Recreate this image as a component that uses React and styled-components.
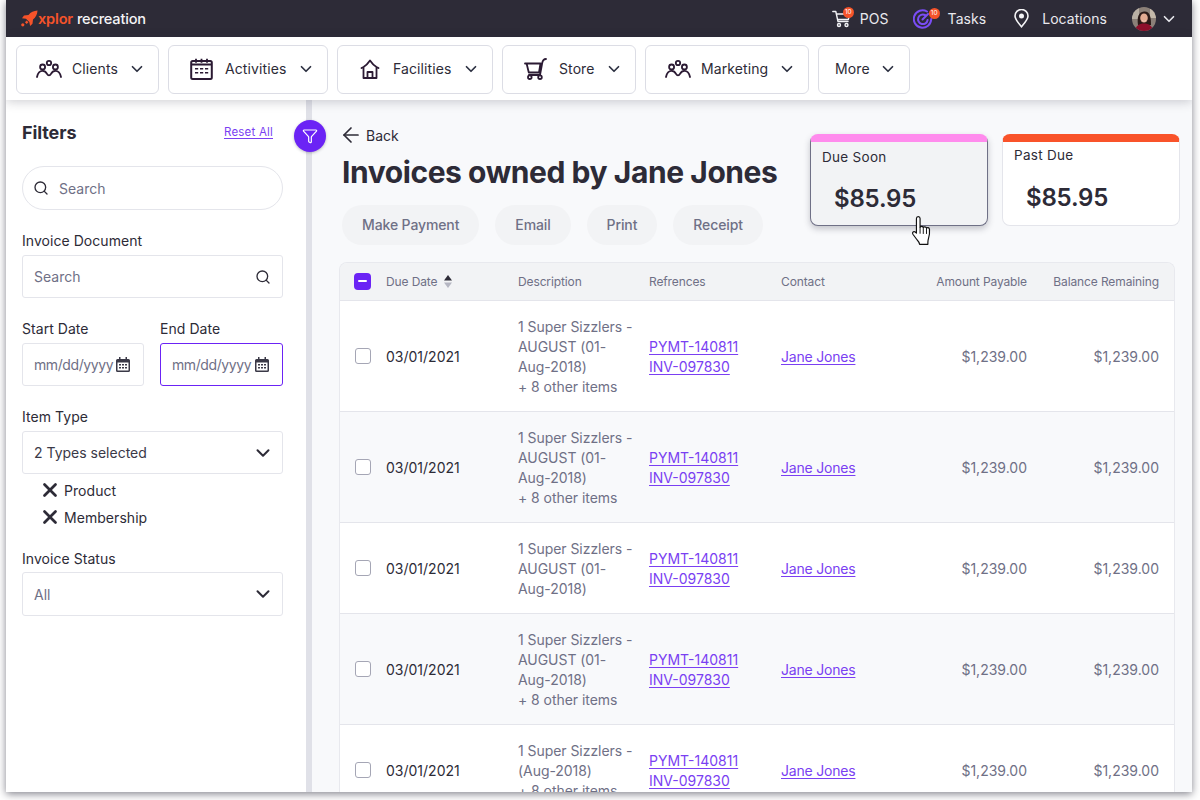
import React from "react";
import styled, { createGlobalStyle } from "styled-components";
import { ArrowLeft, ChevronDown, Funnel, Search, X } from "lucide-react";

const Global = createGlobalStyle`
  html, body { margin: 0; padding: 0; background: #fff; height: 800px; overflow: hidden; }
  body { font-family: Inter, "Liberation Sans", sans-serif; color: #2d2b37; }
  * { box-sizing: border-box; }
`;

const Frame = styled.div`
  width: 1200px;
  height: 800px;
  overflow: hidden;
`;
const Screen = styled.div`
  position: relative;
  width: 1186px;
  height: 792px;
  margin: 0 8px 8px 6px;
  display: flex;
  flex-direction: column;
  overflow: hidden;
  background: #fff;
  box-shadow: 0 2px 8px rgba(30, 30, 45, .55);
`;
const TopBar = styled.header`
  height: 37px;
  flex: none;
  background: #2d2b37;
  display: flex;
  align-items: center;
  justify-content: space-between;
  padding: 0 14px 0 15px;
`;
const Logo = styled.div`
  display: flex;
  align-items: center;
  font-size: 14.6px;
  letter-spacing: -.2px;
`;
const LogoMark = styled.span`
  color: #f5532a;
  font-weight: 600;
  margin-right: 4px;
`;
const LogoWord = styled.span`
  color: #f4f4f6;
  font-weight: 500;
`;
const TopActions = styled.nav`
  display: flex;
  align-items: center;
`;
const TopAction = styled.div`
  position: relative;
  display: flex;
  align-items: center;
  gap: ${p => p.$gap}px;
  margin-left: ${p => p.$ml}px;
  color: #e9e9ee;
  font-size: 14px;
  letter-spacing: .05px;
`;
const CountBadge = styled.span`
  position: absolute;
  left: ${p => p.$left}px;
  top: ${p => p.$top}px;
  width: 11px;
  height: 11px;
  border-radius: 50%;
  background: #f5532a;
  color: #fff;
  font-size: 6.5px;
  line-height: 11px;
  text-align: center;
  letter-spacing: 0;
`;
const AvatarWrap = styled.div`
  display: flex;
  align-items: center;
  gap: 4px;
  margin-left: 25px;
  color: #e9e9ee;
`;
const NavBar = styled.nav`
  position: relative;
  z-index: 2;
  height: 63px;
  flex: none;
  background: #fff;
  display: flex;
  gap: 9px;
  padding: 8px 10px 0;
  box-shadow: 0 2px 10px rgba(40, 40, 60, .22);
`;
const NavButton = styled.button`
  width: ${p => p.$w}px;
  height: 49px;
  border: 1px solid #dcdde5;
  border-radius: 6px;
  background: #fff;
  display: flex;
  align-items: center;
  padding: 0 12px 2px ${p => p.$pl}px;
  font: 400 14px Inter, sans-serif;
  letter-spacing: .1px;
  color: #2d2b37;
`;
const NavIcon = styled.span`
  display: flex;
  margin-right: ${p => p.$mr}px;
`;
const NavChevron = styled(ChevronDown)`
  margin-left: auto;
  flex: none;
`;
const Body = styled.div`
  flex: 1;
  min-height: 0;
  display: flex;
  position: relative;
`;
const Sidebar = styled.aside`
  width: 306px;
  flex: none;
  background: #fff;
  border-right: 6px solid #e0e1e8;
  padding: 20px 23px 0 16px;
`;
const SidebarHead = styled.div`
  display: flex;
  align-items: center;
  justify-content: space-between;
  height: 24px;
  margin-right: 10px;
  margin-bottom: 22px;
`;
const SidebarTitle = styled.h2`
  margin: 0;
  font-size: 18px;
  font-weight: 700;
  color: #2d2b37;
  letter-spacing: -.1px;
`;
const ResetLink = styled.a`
  color: #7a3ff2;
  font-size: 11.5px;
  text-decoration: underline;
  text-underline-offset: 2px;
  letter-spacing: .2px;
`;
const Control = styled.div`
  display: flex;
  align-items: center;
  height: ${p => p.$h || 43}px;
  border: 1px solid ${p => p.$focus ? "#6b23f5" : "#e4e5eb"};
  border-radius: ${p => p.$pill ? "22px" : "3px"};
  padding: 0 ${p => p.$pr ?? 11}px 0 ${p => p.$pl ?? 11}px;
  gap: ${p => p.$gap || 0}px;
  font-size: 14px;
  letter-spacing: ${p => p.$ls ?? 0}px;
  color: ${p => p.$dark ? "#3a3947" : "#6f7086"};
  background: #fff;
`;
const Grow = styled.span`
  flex: 1;
  white-space: nowrap;
`;
const FieldLabel = styled.label`
  display: block;
  font-size: 14px;
  line-height: 20px;
  letter-spacing: .05px;
  color: #2d2b37;
  margin-bottom: ${p => p.$mb ?? 4}px;
`;
const Field = styled.div`
  margin-top: ${p => p.$mt}px;
`;
const DateRow = styled.div`
  display: grid;
  grid-template-columns: 122px 123px;
  gap: 16px;
  margin-top: 21px;
`;
const Chips = styled.div`
  display: flex;
  flex-direction: column;
  gap: 7px;
  padding: 6px 0 0 17px;
`;
const Chip = styled.div`
  display: flex;
  align-items: center;
  gap: 3px;
  height: 20px;
  font-size: 14px;
  letter-spacing: .05px;
  color: #2d2b37;
`;
const FilterFab = styled.button`
  position: absolute;
  left: 288px;
  top: 20px;
  width: 32px;
  height: 32px;
  z-index: 3;
  padding: 0;
  border: none;
  border-radius: 50%;
  background: #6b23f5;
  color: #fff;
  display: flex;
  align-items: center;
  justify-content: center;
  box-shadow: 0 1px 3px rgba(40, 40, 60, .3);
`;
const Main = styled.main`
  flex: 1;
  min-width: 0;
  background: #f8f9fb;
  padding: 25px 17px 0 27px;
  overflow: hidden;
`;
const MainHead = styled.div`
  display: flex;
  justify-content: space-between;
  margin-bottom: 17px;
`;
const HeadLeft = styled.div`
  padding-left: 3px;
`;
const BackLink = styled.div`
  display: flex;
  align-items: center;
  gap: 3px;
  height: 20px;
  font-size: 14px;
  letter-spacing: 0;
`;
const BackArrow = styled(ArrowLeft)`
  margin-left: -3px;
`;
const Title = styled.h1`
  margin: 9px 0 15px;
  font-size: 30px;
  line-height: 36px;
  font-weight: 700;
  letter-spacing: -.43px;
  color: #2d2b37;
  white-space: nowrap;
`;
const Actions = styled.div`
  display: flex;
  gap: 16px;
`;
const PillButton = styled.button`
  height: 40px;
  padding: 0 20px 1px;
  border: none;
  border-radius: 20px;
  background: #f2f3f5;
  color: #6f7086;
  font: 500 14px Inter, sans-serif;
  letter-spacing: -.12px;
`;
const Cards = styled.div`
  display: flex;
  gap: 14px;
  margin: 9px -5px 0 0;
`;
const DueCard = styled.div`
  position: relative;
  width: 178px;
  height: 92px;
  border-radius: 8px;
  background: ${p => p.$hover ? "#f2f3f5" : "#fff"};
  border: 1px solid ${p => p.$hover ? "#6f7086" : "#e4e5eb"};
  border-top: 8px solid ${p => p.$band};
  box-shadow: ${p => p.$hover ? "0 3px 6px rgba(40,40,60,.25)" : "none"};
  padding: ${p => p.$hover ? 7 : 5}px 11px 0;
`;
const CardLabel = styled.div`
  font-size: 13.5px;
  line-height: 16px;
  letter-spacing: .3px;
`;
const CardValue = styled.div`
  margin: ${p => p.$mt}px 0 0 12px;
  font-size: 24px;
  line-height: 30px;
  font-weight: 600;
  letter-spacing: -.2px;
`;
const Pointer = styled.svg`
  position: absolute;
  left: 100px;
  top: 73px;
`;
const Table = styled.section`
  border: 1px solid #e8e9ee;
  border-bottom: none;
  border-radius: 8px 8px 0 0;
  overflow: hidden;
`;
const Row = styled.div`
  display: grid;
  grid-template-columns: 32px 132px 131px 132px 132px 114px 132px;
  align-items: center;
  padding: 0 15px 0 14px;
`;
const HeadRow = styled(Row)`
  height: 38px;
  padding-bottom: 1px;
  background: #f2f3f5;
  border-bottom: 1px solid #e4e5eb;
  font-size: 12px;
  letter-spacing: -.12px;
  color: #6f7086;
`;
const BodyRow = styled(Row)`
  padding-top: 16px;
  padding-bottom: 14px;
  background: ${p => p.$alt ? "#f8f9fb" : "#fff"};
  border-bottom: 1px solid #e4e5eb;
  font-size: 14px;
  line-height: 20px;
  letter-spacing: 0;
`;
const RightCell = styled.div`
  text-align: right;
  color: #6f7086;
`;
const SortCell = styled.div`
  display: flex;
  align-items: center;
  gap: 7px;
`;
const DateCell = styled.div`
  color: #2d2b37;
`;
const DescCell = styled.div`
  color: #6f7086;
  letter-spacing: -.05px;
  white-space: pre-line;
`;
const RefCell = styled.div`
  display: flex;
  flex-direction: column;
  align-items: flex-start;
`;
const TextLink = styled.a`
  color: #7a3ff2;
  text-decoration: underline;
  text-underline-offset: 2px;
  justify-self: start;
`;
const ContactLink = styled(TextLink)`
  letter-spacing: -.2px;
`;
const Check = styled.span`
  width: 16px;
  height: 16px;
  border: 1.5px solid #a5a6b5;
  border-radius: 3px;
  background: #fff;
  display: block;
  margin: -2px 0 0 1px;
`;
const CheckOn = styled.span`
  width: 17px;
  height: 17px;
  border-radius: 4px;
  background: #6b23f5;
  display: flex;
  align-items: center;
  justify-content: center;
  &::after { content: ""; width: 9px; height: 2px; background: #fff; border-radius: 1px; }
`;
const DateSvg = styled.svg`
  flex: none;
`;

const Ink = "#2b1a33";
const stroke = { fill: "none", stroke: Ink, strokeWidth: 1.8, strokeLinecap: "round", strokeLinejoin: "round" };

const PeopleIcon = () => (
  <svg width="26" height="20" viewBox="0 0 26 20" {...stroke}>
    <circle cx="13" cy="4" r="2.2" />
    <circle cx="6.6" cy="8" r="2.5" />
    <circle cx="19.4" cy="8" r="2.5" />
    <path d="M1 18c.8-4 2.8-6.2 5.6-6.2 2 0 3.4 1 4.4 3 .5 1 1.3 1.6 2 1.6s1.500-.6 2-1.600c1-2 2.400-3 4.400-3 2.800 0 4.800 2.200 5.600 6.200" />
  </svg>
);
const CalendarIcon = () => (
  <svg width="23" height="22" viewBox="0 0 23 22" fill="none">
    <rect x="1.200" y="3" width="20.600" height="18" rx="1.500" stroke={Ink} strokeWidth="2" />
    <path d="M1.500 6.500h20M6 .8v4M11.500 .8v4M17 .8v4" stroke={Ink} strokeWidth="1.800" />
    <path d="M5 10h3.200v1.500H5zM10 10h3.200v1.500H10zM15 10h3.200v1.500H15zM5 14h3.200v1.500H5zM10 14h3.200v1.500H10zM15 14h3.200v1.500H15z" fill={Ink} />
  </svg>
);
const HouseIcon = () => (
  <svg width="20" height="20" viewBox="0 0 20 20" {...stroke}>
    <path d="M1.500 9L3.500 8c2.500-1.500 4.500-3.500 6.500-6.500 2 3 4 5 6.500 6.500l2 1M3.500 8.500V19h13V8.500" />
    <path d="M7.500 19v-6h5v6" />
  </svg>
);
const StoreCart = () => (
  <svg width="23" height="22" viewBox="0 0 23 22" {...stroke}>
    <path d="M1 5.500h15.500l-1.500 9H4.800L2.600 5.500M22 1c-2.500 0-3.300 1.500-3.800 4L16 17H5" />
    <circle cx="5.800" cy="19.200" r="1.800" />
    <circle cx="16" cy="19.200" r="1.800" />
  </svg>
);
const RocketLogo = () => (
  <svg width="17" height="17" viewBox="0 0 17 17" fill="#f5532a">
    <path d="M16.500.5c-3.800.2-6.700 1.600-9 4.400L3 5.600 1 8.200l4 .6 3.300 3.300.8 4 2.400-2.300.5-4.400c2.900-2.300 4.300-5.200 4.500-9z" />
    <circle cx="1.800" cy="14.800" r="1.600" />
    <rect x="4.500" y="11" width="2.500" height="2.500" transform="rotate(45 5.700 12.200)" />
  </svg>
);
const TopCart = () => (
  <svg width="19" height="18" viewBox="0 0 19 18" fill="none" stroke="#f2f2f5" strokeWidth="1.400" strokeLinecap="round" strokeLinejoin="round">
    <path d="M.8 1.500h3l2.200 10h10M4.300 4h13.500l-1.500 5.500H5.500" />
    <circle cx="7" cy="15" r="1.500" />
    <circle cx="14.500" cy="15" r="1.500" />
  </svg>
);
const TargetIcon = () => (
  <svg width="20" height="20" viewBox="0 0 20 20" fill="none" stroke="#7a4df5" strokeWidth="2" strokeLinecap="round">
    <path d="M14 2.500A8.700 8.700 0 1 0 18.200 10" />
    <path d="M12 6a4.800 4.800 0 1 0 2.600 5" />
    <path d="M9.500 10.500L15 5" />
  </svg>
);
const PinIcon = () => (
  <svg width="15" height="19" viewBox="0 0 15 19" fill="none" stroke="#f4f4f6" strokeWidth="1.600">
    <path d="M7.500 17.800c-3.800-4.500-6.500-7.500-6.500-10.800a6.500 6.500 0 0 1 13 0c0 3.300-2.700 6.300-6.500 10.800z" />
    <circle cx="7.500" cy="7" r="1.700" fill="#f4f4f6" />
  </svg>
);
const Avatar = () => (
  <svg width="24" height="24" viewBox="0 0 24 24">
    <defs><clipPath id="av"><circle cx="12" cy="12" r="12" /></clipPath></defs>
    <g clipPath="url(#av)">
      <rect width="24" height="24" fill="#8b8078" />
      <rect x="0" y="0" width="7" height="12" fill="#b9b0a4" />
      <rect x="18" y="2" width="6" height="9" fill="#c4b9aa" />
      <path d="M6 18c-1-7 0-13 6-13.500S19 10 19 18z" fill="#2a1a18" />
      <ellipse cx="12" cy="11" rx="3.800" ry="4.600" fill="#e2ab92" />
      <path d="M9.800 13.300c1.400 1 3 1 4.400 0-.6 1.300-3.800 1.300-4.400 0z" fill="#fff" />
      <path d="M3 24c.5-5 4-7.500 9-7.500s8.500 2.500 9 7.500z" fill="#8d0f2b" />
    </g>
  </svg>
);
const DateGlyph = () => (
  <DateSvg width="14" height="15" viewBox="0 0 14 15">
    <path d="M3 0h1.500v2h5V0H11v2h1.500A1.500 1.500 0 0 1 14 3.500v10a1.500 1.500 0 0 1-1.500 1.500h-11A1.500 1.500 0 0 1 0 13.500v-10A1.500 1.500 0 0 1 1.500 2H3z" fill="#3a3947" />
    <path d="M1.500 5.500h11v8h-11z" fill="#fff" />
    <path d="M3 7h2v1.500H3zM6 7h2v1.500H6zM9 7h2v1.500H9zM3 10h2v1.500H3zM6 10h2v1.500H6zM9 10h2v1.500H9z" fill="#3a3947" />
  </DateSvg>
);
const SortGlyph = () => (
  <svg width="8" height="13" viewBox="0 0 8 13">
    <path d="M4 0l4 5.500H0z" fill="#2d2b37" />
    <path d="M4 13L0 7.500h8z" fill="#b5b6c2" />
  </svg>
);
const HandCursor = () => (
  <Pointer width="22" height="31" viewBox="0 0 20 29">
    <path d="M6.500 1.500c1 0 1.700.7 1.700 1.800v8.200c.3-1 2.600-1.200 3 .2.500-.9 2.500-.9 3 .5.700-.8 2.600-.5 2.800 1.200.2 2.500 0 6-.9 8.500-.3 1-.6 2-.6 3.500v2H7.800c-.4-1.500-1-2.700-2.300-4L1.500 18c-1-1.500.4-3 1.800-2.300l1.500 1.300V3.300c0-1.100.7-1.800 1.700-1.800z" fill="#fff" stroke="#111" strokeWidth="1.100" strokeLinejoin="round" />
    <path d="M8.200 11.500v6M11.200 11.700v6M14.200 12.200v5.500" stroke="#111" strokeWidth=".9" fill="none" />
  </Pointer>
);

const navItems = [
  { label: "Clients", icon: <PeopleIcon />, w: 143, pl: 19, mr: 10 },
  { label: "Activities", icon: <CalendarIcon />, w: 160, pl: 21, mr: 12 },
  { label: "Facilities", icon: <HouseIcon />, w: 156, pl: 22, mr: 13 },
  { label: "Store", icon: <StoreCart />, w: 134, pl: 21, mr: 12 },
  { label: "Marketing", icon: <PeopleIcon />, w: 164, pl: 19, mr: 10 },
  { label: "More", w: 92, pl: 16 },
];
const actions = ["Make Payment", "Email", "Print", "Receipt"];
const rows = [
  { desc: "1 Super Sizzlers -\nAUGUST (01-\nAug-2018)\n+ 8 other items" },
  { desc: "1 Super Sizzlers -\nAUGUST (01-\nAug-2018)\n+ 8 other items", alt: true },
  { desc: "1 Super Sizzlers -\nAUGUST (01-\nAug-2018)" },
  { desc: "1 Super Sizzlers -\nAUGUST (01-\nAug-2018)\n+ 8 other items", alt: true },
  { desc: "1 Super Sizzlers -\n(Aug-2018)\n+ 8 other items" },
];

export default function App() {
  return (
    <Frame>
      <Global />
      <Screen>
        <TopBar>
          <Logo>
            <RocketLogo />
            <LogoMark>xplor</LogoMark>
            <LogoWord>recreation</LogoWord>
          </Logo>
          <TopActions>
            <TopAction $gap={9}>
              <TopCart />
              <CountBadge $left={11} $top={-3}>10</CountBadge>
              POS
            </TopAction>
            <TopAction $gap={15} $ml={24}>
              <TargetIcon />
              <CountBadge $left={16} $top={-1}>10</CountBadge>
              Tasks
            </TopAction>
            <TopAction $gap={13} $ml={28}>
              <PinIcon />
              Locations
            </TopAction>
            <AvatarWrap>
              <Avatar />
              <ChevronDown size={18} strokeWidth={2.2} />
            </AvatarWrap>
          </TopActions>
        </TopBar>
        <NavBar>
          {navItems.map(n => (
            <NavButton key={n.label} $w={n.w} $pl={n.pl}>
              {n.icon && <NavIcon $mr={n.mr}>{n.icon}</NavIcon>}
              {n.label}
              <NavChevron size={18} strokeWidth={2.3} color="#2d3142" />
            </NavButton>
          ))}
        </NavBar>
        <Body>
          <Sidebar>
            <SidebarHead>
              <SidebarTitle>Filters</SidebarTitle>
              <ResetLink>Reset All</ResetLink>
            </SidebarHead>
            <Control $pill $h={44} $pl={10} $gap={10}>
              <Search size={16} color="#2d2b37" strokeWidth={2} />
              <Grow>Search</Grow>
            </Control>
            <Field $mt={21}>
              <FieldLabel>Invoice Document</FieldLabel>
              <Control>
                <Grow>Search</Grow>
                <Search size={16} color="#2d2b37" strokeWidth={2} />
              </Control>
            </Field>
            <DateRow>
              <div>
                <FieldLabel>Start Date</FieldLabel>
                <Control $pr={13} $ls={-0.4}>
                  <Grow>mm/dd/yyyy</Grow>
                  <DateGlyph />
                </Control>
              </div>
              <div>
                <FieldLabel>End Date</FieldLabel>
                <Control $focus $pr={13} $ls={-0.4}>
                  <Grow>mm/dd/yyyy</Grow>
                  <DateGlyph />
                </Control>
              </div>
            </DateRow>
            <Field $mt={21}>
              <FieldLabel>Item Type</FieldLabel>
              <Control $dark $pr={8}>
                <Grow>2 Types selected</Grow>
                <ChevronDown size={22} color="#2d2b37" strokeWidth={2.2} />
              </Control>
              <Chips>
                <Chip><X size={22} strokeWidth={3} />Product</Chip>
                <Chip><X size={22} strokeWidth={3} />Membership</Chip>
              </Chips>
            </Field>
            <Field $mt={22}>
              <FieldLabel $mb={3}>Invoice Status</FieldLabel>
              <Control $h={44} $pr={8}>
                <Grow>All</Grow>
                <ChevronDown size={22} color="#2d2b37" strokeWidth={2.2} />
              </Control>
            </Field>
          </Sidebar>
          <FilterFab><Funnel size={16} strokeWidth={1.8} /></FilterFab>
          <Main>
            <MainHead>
              <HeadLeft>
                <BackLink><BackArrow size={24} strokeWidth={1.7} />Back</BackLink>
                <Title>Invoices owned by Jane Jones</Title>
                <Actions>
                  {actions.map(a => <PillButton key={a}>{a}</PillButton>)}
                </Actions>
              </HeadLeft>
              <Cards>
                <DueCard $hover $band="#ff8bed">
                  <CardLabel>Due Soon</CardLabel>
                  <CardValue $mt={19}>$85.95</CardValue>
                  <HandCursor />
                </DueCard>
                <DueCard $band="#f9532a">
                  <CardLabel>Past Due</CardLabel>
                  <CardValue $mt={20}>$85.95</CardValue>
                </DueCard>
              </Cards>
            </MainHead>
            <Table>
              <HeadRow>
                <CheckOn />
                <SortCell>Due Date <SortGlyph /></SortCell>
                <div>Description</div>
                <div>Refrences</div>
                <div>Contact</div>
                <RightCell>Amount Payable</RightCell>
                <RightCell>Balance Remaining</RightCell>
              </HeadRow>
              {rows.map((r, i) => (
                <BodyRow key={i} $alt={r.alt}>
                  <Check />
                  <DateCell>03/01/2021</DateCell>
                  <DescCell>{r.desc}</DescCell>
                  <RefCell>
                    <TextLink>PYMT-140811</TextLink>
                    <TextLink>INV-097830</TextLink>
                  </RefCell>
                  <ContactLink>Jane Jones</ContactLink>
                  <RightCell>$1,239.00</RightCell>
                  <RightCell>$1,239.00</RightCell>
                </BodyRow>
              ))}
            </Table>
          </Main>
        </Body>
      </Screen>
    </Frame>
  );
}
